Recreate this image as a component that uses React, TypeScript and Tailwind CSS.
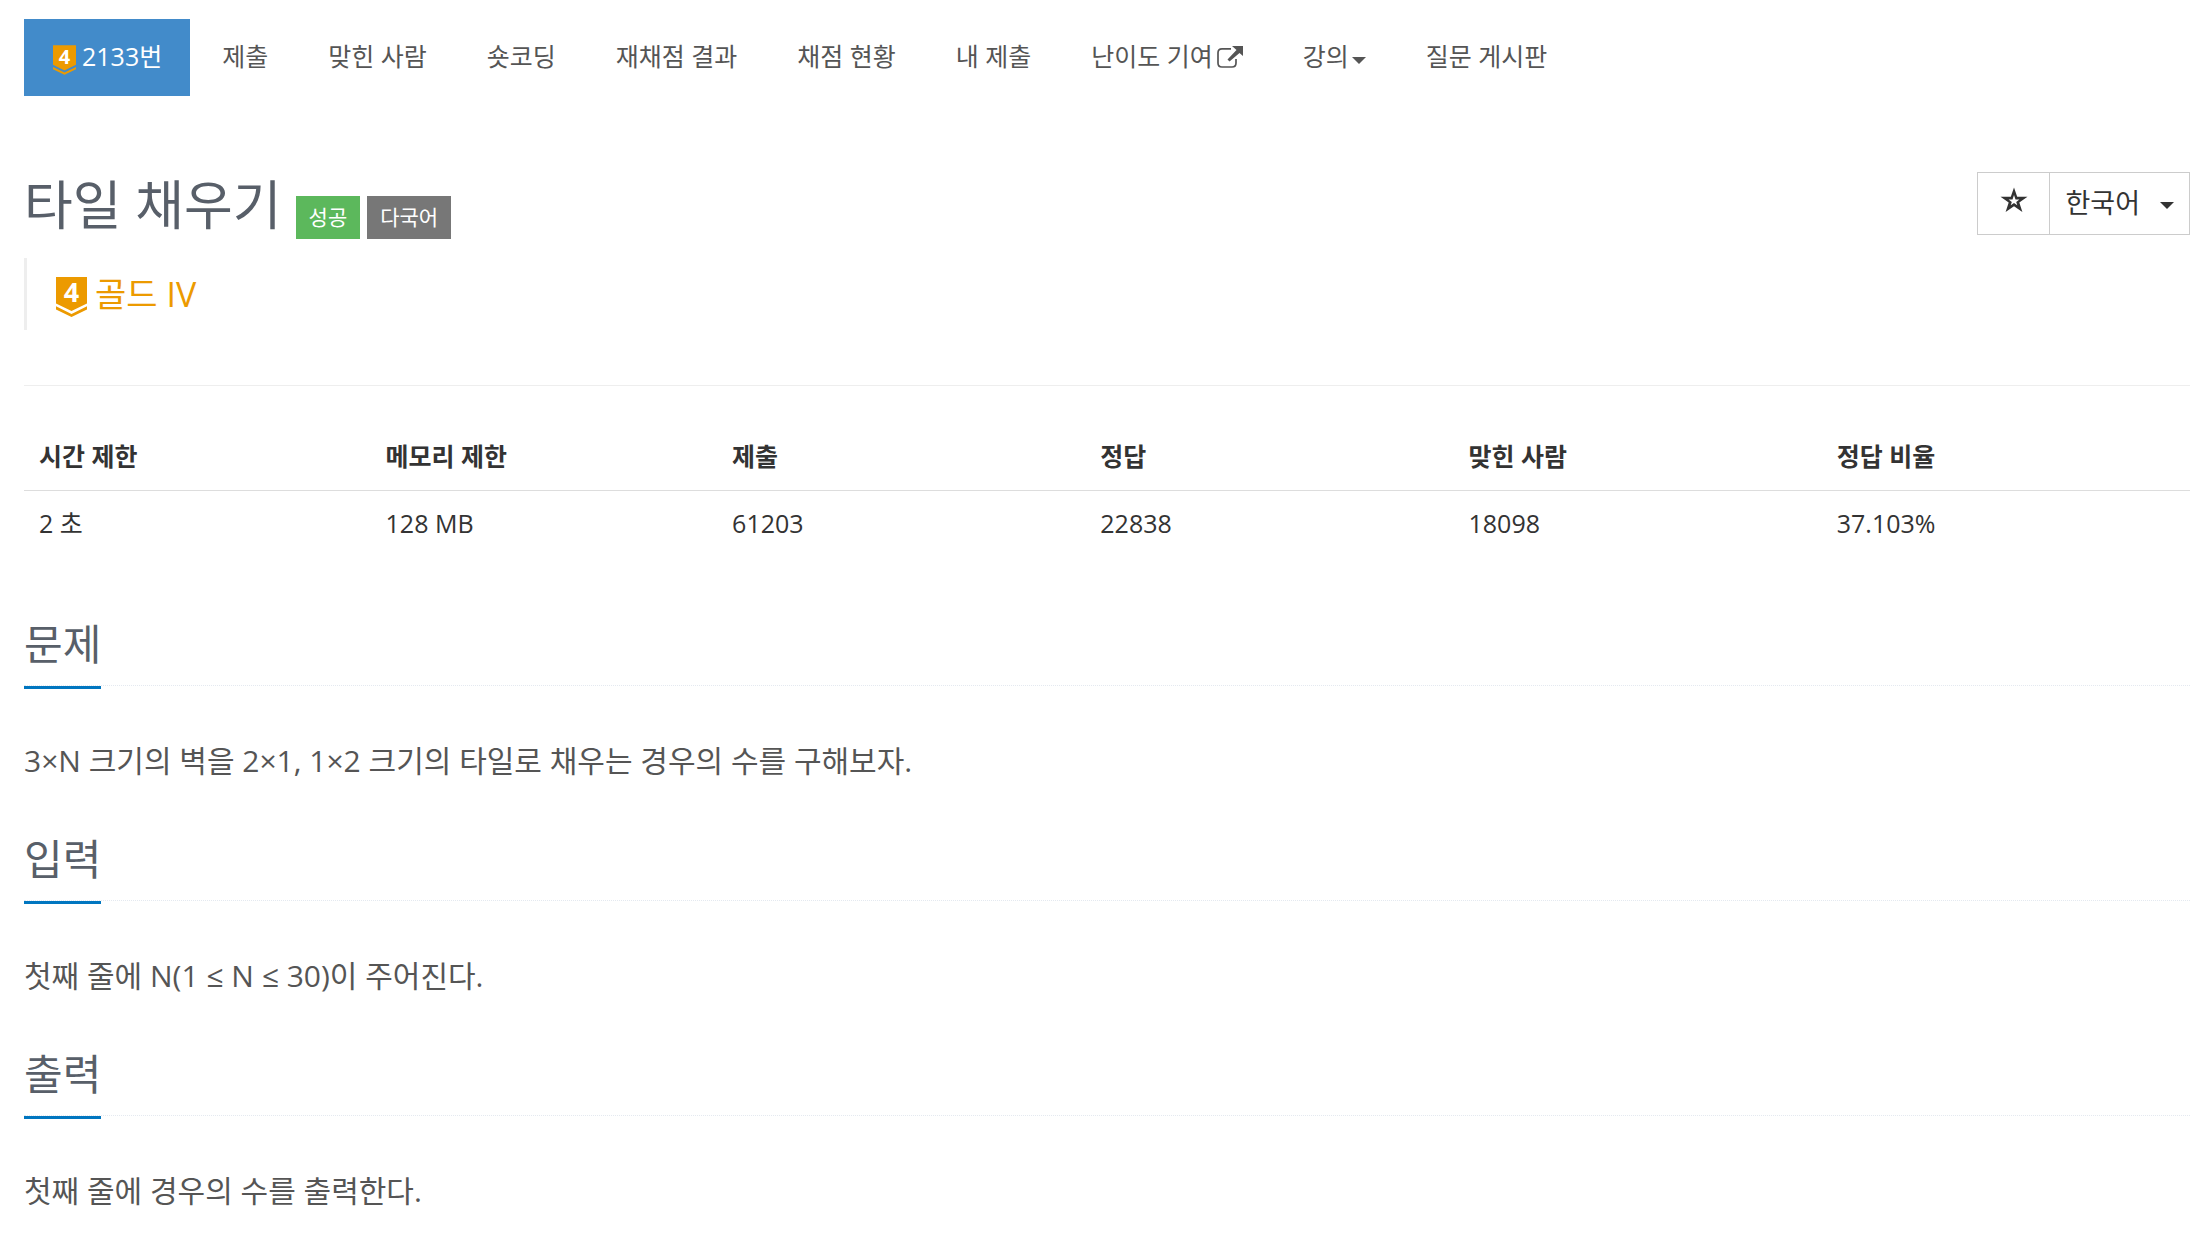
import React from "react";

const FONT = "font-['Open_Sans','Noto_Sans_CJK_KR',sans-serif]";

function TierBadge({ className }: { className: string }) {
  return (
    <svg viewBox="0 0 31 40" className={`shrink-0 overflow-visible ${className}`} role="img" aria-label="골드 IV">
      <path d="M0 0H31V26.500L15.500 34L0 26.500Z" fill="#ec9a00" />
      <path d="M0 29.300L15.500 37L31 29.300V32.500L15.500 40L0 32.500Z" fill="#ec9a00" />
      <text x="15.500" y="25" textAnchor="middle" fontSize="27" fontWeight="700" fill="#fff" fontFamily="Open Sans">4</text>
    </svg>
  );
}

function Caret({ className }: { className: string }) {
  return (
    <svg viewBox="0 0 14 7" className={className} aria-hidden="true">
      <path d="M0 0H14L7 7Z" fill="currentColor" />
    </svg>
  );
}

function NewWindow() {
  return (
    <svg viewBox="0 0 26 22" className="ml-1 h-[22px] w-[26px]" aria-hidden="true">
      <path d="M14 2.800H5Q1 2.800 1 6.800V17Q1 21 5 21H15Q19 21 19 17V13" fill="none" stroke="currentColor" strokeWidth="1.700" />
      <path d="M15 0H26V10L22.500 7L12.500 15.500L10.500 13.500L19.500 4Z" fill="currentColor" />
    </svg>
  );
}

function Star() {
  return (
    <svg viewBox="0 0 28 26" className="-mt-[7px] h-[26px] w-7" aria-hidden="true">
      <path
        d="M14 0.500L17.200 9.800H27.500L19.300 15.500L22.400 25L14 19.200L5.600 25L8.700 15.500L0.500 9.800H10.800ZM14 8L12.500 12.600H8.600L11.800 15L10.700 18.300L14 16L17.300 18.300L16.200 15L19.400 12.600H15.500Z"
        fill="currentColor"
        fillRule="evenodd"
      />
    </svg>
  );
}

const links = ["제출", "맞힌 사람", "숏코딩", "재채점 결과", "채점 현황", "내 제출", "난이도 기여", "강의", "질문 게시판"];

const stats = [
  { label: "시간 제한", value: "2 초", width: "w-[16%]" },
  { label: "메모리 제한", value: "128 MB", width: "w-[16%]" },
  { label: "제출", value: "61203", width: "w-[17%]" },
  { label: "정답", value: "22838", width: "w-[17%]" },
  { label: "맞힌 사람", value: "18098", width: "w-[17%]" },
  { label: "정답 비율", value: "37.103%", width: "w-[17%]" },
];

const sections = [
  { title: "문제", body: "3×N 크기의 벽을 2×1, 1×2 크기의 타일로 채우는 경우의 수를 구해보자." },
  { title: "입력", body: "첫째 줄에 N(1 ≤ N ≤ 30)이 주어진다." },
  { title: "출력", body: "첫째 줄에 경우의 수를 출력한다." },
];

export default function App() {
  return (
    <main className={`${FONT} bg-white pl-6 pr-[21px] pt-[19px] text-[25px] text-[#333]`}>
      <nav className="flex items-stretch gap-1 leading-[31px] text-[#555]">
        <a href="#problem" className="flex items-center bg-[#428bca] pb-[21px] pl-[29px] pr-7 pt-[19px] text-white">
          <TierBadge className="mr-[6px] mt-[7px] h-[30px] w-[23px]" />
          <span>2133번</span>
        </a>
        {links.map((label) => (
          <a key={label} href="#menu" className="flex items-center px-7 pb-[21px] pt-[19px]">
            {label}
            {label === "난이도 기여" && <NewWindow />}
            {label === "강의" && <Caret className="ml-[3px] mt-[7px] h-[7px] w-[14px]" />}
          </a>
        ))}
      </nav>

      <header className="mt-[70px] flex items-start justify-between">
        <div className="flex items-end">
          <h1 className="text-[53px] leading-[77px] text-[#585f69]">타일 채우기</h1>
          <span className="mb-1 ml-[14px] bg-[#5cb85c] px-[13px] text-[21px] leading-[43px] text-white">성공</span>
          <span className="mb-1 ml-[7px] bg-[#777] px-[13px] text-[21px] leading-[43px] text-white">다국어</span>
        </div>
        <div className="mt-[6px] flex h-[63px] text-[27px]">
          <button aria-label="즐겨찾기" className="flex w-[73px] items-center justify-center border border-[#ccc]">
            <Star />
          </button>
          <button className="-ml-px flex items-center border border-[#ccc] px-[15px]">
            한국어
            <Caret className="ml-5 mt-1 h-[7px] w-[14px]" />
          </button>
        </div>
      </header>

      <blockquote className="mt-[15px] flex h-[72px] items-center border-l-3 border-[#eee] pl-[29px] text-[34px] text-[#ec9a00]">
        <TierBadge className="mr-2 mt-[6px] h-10 w-[31px]" />
        <span>골드 IV</span>
      </blockquote>

      <hr className="mt-[55px] border-[#eee]" />

      <table className="mb-3 mt-[35px] w-full table-fixed text-left leading-[35px]">
        <thead>
          <tr className="border-b border-[#ddd]">
            {stats.map((s) => (
              <th key={s.label} className={`${s.width} px-[15px] pb-4 pt-[18px] font-bold`}>{s.label}</th>
            ))}
          </tr>
        </thead>
        <tbody>
          <tr>
            {stats.map((s) => (
              <td key={s.label} className="px-[15px] pb-4 pt-[15px]">{s.value}</td>
            ))}
          </tr>
        </tbody>
      </table>

      {sections.map((s) => (
        <section key={s.title} className="pt-[43px]">
          <div className="border-b border-dotted border-[#e4e9f0]">
            <h2 className="-mb-[4px] inline-block border-b-3 border-[#0076c0] pb-[11px] text-[42px] leading-[63px] text-[#585f69]">
              {s.title}
            </h2>
          </div>
          <p className="mt-[52px] text-[30px] leading-[46px] text-[#555]">{s.body}</p>
        </section>
      ))}
    </main>
  );
}
